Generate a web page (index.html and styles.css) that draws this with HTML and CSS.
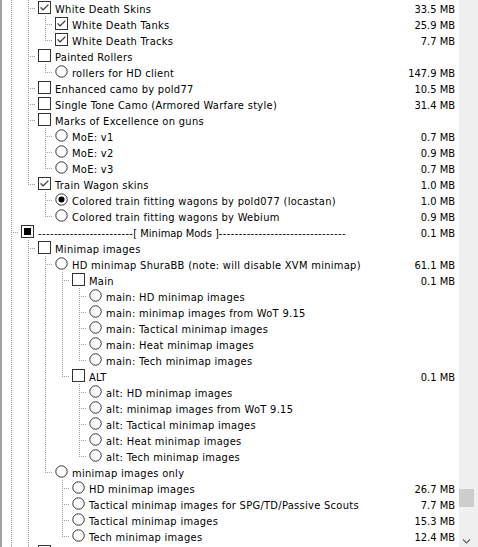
FILE: index.html
```html
<!DOCTYPE html>
<html>
<head>
<meta charset="utf-8">
<link rel="stylesheet" href="styles.css">
</head>
<body>
<svg class="defs" width="0" height="0" aria-hidden="true">
  <defs>
    <symbol id="cb" viewBox="0 0 13 13"><rect x="0.5" y="0.5" width="12" height="12" fill="#fff" stroke="#333"/></symbol>
    <symbol id="cb-on" viewBox="0 0 13 13"><rect x="0.5" y="0.5" width="12" height="12" fill="#fff" stroke="#333"/><path d="M2.6 6.4 L5.1 8.9 L10.4 3.6" fill="none" stroke="#333" stroke-width="1.25"/></symbol>
    <symbol id="cb-mid" viewBox="0 0 13 13"><rect x="0.5" y="0.5" width="12" height="12" fill="#fff" stroke="#333"/><rect x="3" y="3" width="7" height="7" fill="#000"/></symbol>
    <symbol id="rd" viewBox="0 0 13 13"><circle cx="6.5" cy="6.5" r="5.7" fill="#fff" stroke="#333"/></symbol>
    <symbol id="rd-on" viewBox="0 0 13 13"><circle cx="6.5" cy="6.5" r="5.7" fill="#fff" stroke="#333"/><circle cx="6.5" cy="6.5" r="3" fill="#000"/></symbol>
  </defs>
</svg>
<div class="view">
  <div class="tree">
    <div class="row"><i class="g"></i><i class="t"></i><svg class="ico"><use href="#cb-on"/></svg><span class="lbl">White Death Skins</span><span class="size">33.5 MB</span></div>
    <div class="row"><i class="g"></i><i class="g"></i><i class="t"></i><svg class="ico"><use href="#cb-on"/></svg><span class="lbl">White Death Tanks</span><span class="size">25.9 MB</span></div>
    <div class="row"><i class="g"></i><i class="g"></i><i class="l"></i><svg class="ico"><use href="#cb-on"/></svg><span class="lbl">White Death Tracks</span><span class="size">7.7 MB</span></div>
    <div class="row"><i class="g"></i><i class="t"></i><svg class="ico"><use href="#cb"/></svg><span class="lbl">Painted Rollers</span></div>
    <div class="row"><i class="g"></i><i class="g"></i><i class="l"></i><svg class="ico"><use href="#rd"/></svg><span class="lbl">rollers for HD client</span><span class="size">147.9 MB</span></div>
    <div class="row"><i class="g"></i><i class="t"></i><svg class="ico"><use href="#cb"/></svg><span class="lbl">Enhanced camo by pold77</span><span class="size">10.5 MB</span></div>
    <div class="row"><i class="g"></i><i class="t"></i><svg class="ico"><use href="#cb"/></svg><span class="lbl">Single Tone Camo (Armored Warfare style)</span><span class="size">31.4 MB</span></div>
    <div class="row"><i class="g"></i><i class="t"></i><svg class="ico"><use href="#cb"/></svg><span class="lbl">Marks of Excellence on guns</span></div>
    <div class="row"><i class="g"></i><i class="g"></i><i class="t"></i><svg class="ico"><use href="#rd"/></svg><span class="lbl">MoE: v1</span><span class="size">0.7 MB</span></div>
    <div class="row"><i class="g"></i><i class="g"></i><i class="t"></i><svg class="ico"><use href="#rd"/></svg><span class="lbl">MoE: v2</span><span class="size">0.9 MB</span></div>
    <div class="row"><i class="g"></i><i class="g"></i><i class="l"></i><svg class="ico"><use href="#rd"/></svg><span class="lbl">MoE: v3</span><span class="size">0.7 MB</span></div>
    <div class="row"><i class="g"></i><i class="l"></i><svg class="ico"><use href="#cb-on"/></svg><span class="lbl">Train Wagon skins</span><span class="size">1.0 MB</span></div>
    <div class="row"><i class="g"></i><i class="e"></i><i class="t"></i><svg class="ico"><use href="#rd-on"/></svg><span class="lbl">Colored train fitting wagons by pold077 (locastan)</span><span class="size">1.0 MB</span></div>
    <div class="row"><i class="g"></i><i class="e"></i><i class="l"></i><svg class="ico"><use href="#rd"/></svg><span class="lbl">Colored train fitting wagons by Webium</span><span class="size">0.9 MB</span></div>
    <div class="row"><i class="t"></i><svg class="ico"><use href="#cb-mid"/></svg><span class="lbl"><span class="dash">------------------------</span><span class="cat">[ Minimap Mods ]</span><span class="dash">--------------------------------</span></span><span class="size">0.1 MB</span></div>
    <div class="row"><i class="g"></i><i class="t"></i><svg class="ico"><use href="#cb"/></svg><span class="lbl">Minimap images</span></div>
    <div class="row"><i class="g"></i><i class="g"></i><i class="t"></i><svg class="ico"><use href="#rd"/></svg><span class="lbl">HD minimap ShuraBB (note: will disable XVM minimap)</span><span class="size">61.1 MB</span></div>
    <div class="row"><i class="g"></i><i class="g"></i><i class="g"></i><i class="t"></i><svg class="ico"><use href="#cb"/></svg><span class="lbl">Main</span><span class="size">0.1 MB</span></div>
    <div class="row"><i class="g"></i><i class="g"></i><i class="g"></i><i class="g"></i><i class="t"></i><svg class="ico"><use href="#rd"/></svg><span class="lbl">main: HD minimap images</span></div>
    <div class="row"><i class="g"></i><i class="g"></i><i class="g"></i><i class="g"></i><i class="t"></i><svg class="ico"><use href="#rd"/></svg><span class="lbl">main: minimap images from WoT 9.15</span></div>
    <div class="row"><i class="g"></i><i class="g"></i><i class="g"></i><i class="g"></i><i class="t"></i><svg class="ico"><use href="#rd"/></svg><span class="lbl">main: Tactical minimap images</span></div>
    <div class="row"><i class="g"></i><i class="g"></i><i class="g"></i><i class="g"></i><i class="t"></i><svg class="ico"><use href="#rd"/></svg><span class="lbl">main: Heat minimap images</span></div>
    <div class="row"><i class="g"></i><i class="g"></i><i class="g"></i><i class="g"></i><i class="l"></i><svg class="ico"><use href="#rd"/></svg><span class="lbl">main: Tech minimap images</span></div>
    <div class="row"><i class="g"></i><i class="g"></i><i class="g"></i><i class="l"></i><svg class="ico"><use href="#cb"/></svg><span class="lbl">ALT</span><span class="size">0.1 MB</span></div>
    <div class="row"><i class="g"></i><i class="g"></i><i class="g"></i><i class="e"></i><i class="t"></i><svg class="ico"><use href="#rd"/></svg><span class="lbl">alt: HD minimap images</span></div>
    <div class="row"><i class="g"></i><i class="g"></i><i class="g"></i><i class="e"></i><i class="t"></i><svg class="ico"><use href="#rd"/></svg><span class="lbl">alt: minimap images from WoT 9.15</span></div>
    <div class="row"><i class="g"></i><i class="g"></i><i class="g"></i><i class="e"></i><i class="t"></i><svg class="ico"><use href="#rd"/></svg><span class="lbl">alt: Tactical minimap images</span></div>
    <div class="row"><i class="g"></i><i class="g"></i><i class="g"></i><i class="e"></i><i class="t"></i><svg class="ico"><use href="#rd"/></svg><span class="lbl">alt: Heat minimap images</span></div>
    <div class="row"><i class="g"></i><i class="g"></i><i class="g"></i><i class="e"></i><i class="l"></i><svg class="ico"><use href="#rd"/></svg><span class="lbl">alt: Tech minimap images</span></div>
    <div class="row"><i class="g"></i><i class="g"></i><i class="l"></i><svg class="ico"><use href="#rd"/></svg><span class="lbl">minimap images only</span></div>
    <div class="row"><i class="g"></i><i class="g"></i><i class="e"></i><i class="t"></i><svg class="ico"><use href="#rd"/></svg><span class="lbl">HD minimap images</span><span class="size">26.7 MB</span></div>
    <div class="row"><i class="g"></i><i class="g"></i><i class="e"></i><i class="t"></i><svg class="ico"><use href="#rd"/></svg><span class="lbl">Tactical minimap images for SPG/TD/Passive Scouts</span><span class="size">7.7 MB</span></div>
    <div class="row"><i class="g"></i><i class="g"></i><i class="e"></i><i class="t"></i><svg class="ico"><use href="#rd"/></svg><span class="lbl">Tactical minimap images</span><span class="size">15.3 MB</span></div>
    <div class="row"><i class="g"></i><i class="g"></i><i class="e"></i><i class="l"></i><svg class="ico"><use href="#rd"/></svg><span class="lbl">Tech minimap images</span><span class="size">12.4 MB</span></div>
    <div class="row"><i class="g"></i><i class="t"></i><svg class="ico"><use href="#cb"/></svg></div>
  </div>
  <div class="scrollbar">
    <div class="thumb"></div>
    <div class="arrow"><svg width="17" height="17" viewBox="0 0 17 17"><path d="M4 9.5 L7.5 13 L11 9.5" fill="none" stroke="#606060" stroke-width="1.2"/></svg></div>
  </div>
</div>
</body>
</html>
```

FILE: styles.css
```css
html, body {
  margin: 0;
  padding: 0;
  background: #fff;
}

.defs {
  position: absolute;
  width: 0;
  height: 0;
  overflow: hidden;
}

.view {
  box-sizing: border-box;
  width: 478px;
  height: 547px;
  display: flex;
  overflow: hidden;
  border-left: 2px solid #a0a0a0;
  border-right: 2px solid #f0f0f0;
  background: #fff;
}

.tree {
  flex: 1;
  min-width: 0;
  font-family: "DejaVu Sans Condensed", "DejaVu Sans", sans-serif;
  font-size: 11px;
  color: #000;
  padding-right: 4px;
}

.row {
  display: flex;
  align-items: flex-start;
  height: 16px;
  line-height: 16px;
  white-space: nowrap;
}

.row i {
  flex: none;
  width: 17px;
  height: 16px;
  background-repeat: no-repeat;
}

.g {
  background-image: repeating-linear-gradient(to bottom, #a0a0a0 0 1px, transparent 1px 2px);
  background-size: 1px 16px;
  background-position: 9px 0;
}

.t {
  background-image:
    repeating-linear-gradient(to bottom, #a0a0a0 0 1px, transparent 1px 2px),
    repeating-linear-gradient(to right, #a0a0a0 0 1px, transparent 1px 2px);
  background-size: 1px 16px, 8px 1px;
  background-position: 9px 0, 9px 8px;
}

.l {
  background-image:
    repeating-linear-gradient(to bottom, #a0a0a0 0 1px, transparent 1px 2px),
    repeating-linear-gradient(to right, #a0a0a0 0 1px, transparent 1px 2px);
  background-size: 1px 9px, 8px 1px;
  background-position: 9px 0, 9px 8px;
}

.ico {
  flex: none;
  width: 13px;
  height: 13px;
  margin: 1px 0 0 2px;
}

.lbl {
  margin-left: 4px;
  padding-top: 2px;
  letter-spacing: 0.3px;
}

.dash {
  letter-spacing: 0.4px;
}

.cat {
  letter-spacing: 0;
}

.size {
  margin-left: auto;
  padding-left: 8px;
  padding-top: 2px;
}

.scrollbar {
  flex: none;
  width: 17px;
  background: #f0f0f0;
  display: flex;
  flex-direction: column;
  padding-top: 489px;
  box-sizing: border-box;
}

.thumb {
  height: 18px;
  width: 15px;
  background: #cdcdcd;
}

.arrow {
  margin-top: auto;
  height: 17px;
}

.arrow svg {
  display: block;
}
```
